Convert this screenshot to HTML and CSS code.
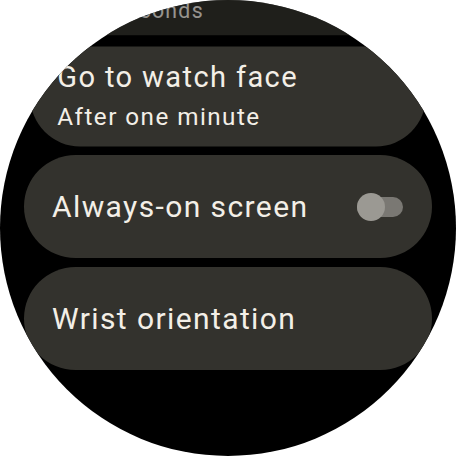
FILE: index.html
```html
<!DOCTYPE html>
<html>
<head>
<meta charset="utf-8">
<link rel="stylesheet" href="styles.css">
</head>
<body>
<div class="watch">
  <div class="list">
    <div class="card card-far">
      <div class="text">
        <div class="title">Screen timeout</div>
        <div class="sub sub-far">15 seconds</div>
      </div>
    </div>
    <div class="card card-near">
      <div class="text">
        <div class="title">Go to watch face</div>
        <div class="sub">After one minute</div>
      </div>
    </div>
    <div class="card">
      <div class="title">Always-on screen</div>
      <div class="toggle"><div class="thumb"></div></div>
    </div>
    <div class="card">
      <div class="title">Wrist orientation</div>
    </div>
  </div>
</div>
</body>
</html>
```
FILE: styles.css
```css
html, body {
  margin: 0;
  padding: 0;
  background: #ffffff;
}
.watch {
  width: 456px;
  height: 456px;
  border-radius: 50%;
  background: #000000;
  overflow: hidden;
  font-family: Roboto, "Noto Sans", sans-serif;
  color: #f3efe7;
}
.list {
  display: flex;
  flex-direction: column;
  gap: 9px;
  padding: 0 24px;
  margin-top: -60px;
}
.card {
  height: 103px;
  border-radius: 52px;
  background: #33322d;
  display: flex;
  align-items: center;
  justify-content: space-between;
  padding: 0 29px 0 28px;
  box-sizing: border-box;
  flex-shrink: 0;
}
.card-far {
  transform: scale(0.85);
  opacity: 0.62;
  margin-bottom: -9px;
}
.card-near {
  transform: translateY(2px) scale(0.97);
}
.title {
  font-size: 30px;
  line-height: 36px;
  letter-spacing: 1.4px;
  white-space: nowrap;
}
.sub {
  font-size: 25px;
  line-height: 32px;
  letter-spacing: 1.5px;
  margin-top: 7px;
  white-space: nowrap;
}
.sub-far {
  margin-top: 11px;
  padding-left: 4px;
}
.toggle {
  width: 46px;
  height: 20px;
  border-radius: 10px;
  background: #7a7873;
  display: flex;
  align-items: center;
}
.thumb {
  width: 28px;
  height: 28px;
  border-radius: 50%;
  background: #9b9993;
  flex-shrink: 0;
}
```
